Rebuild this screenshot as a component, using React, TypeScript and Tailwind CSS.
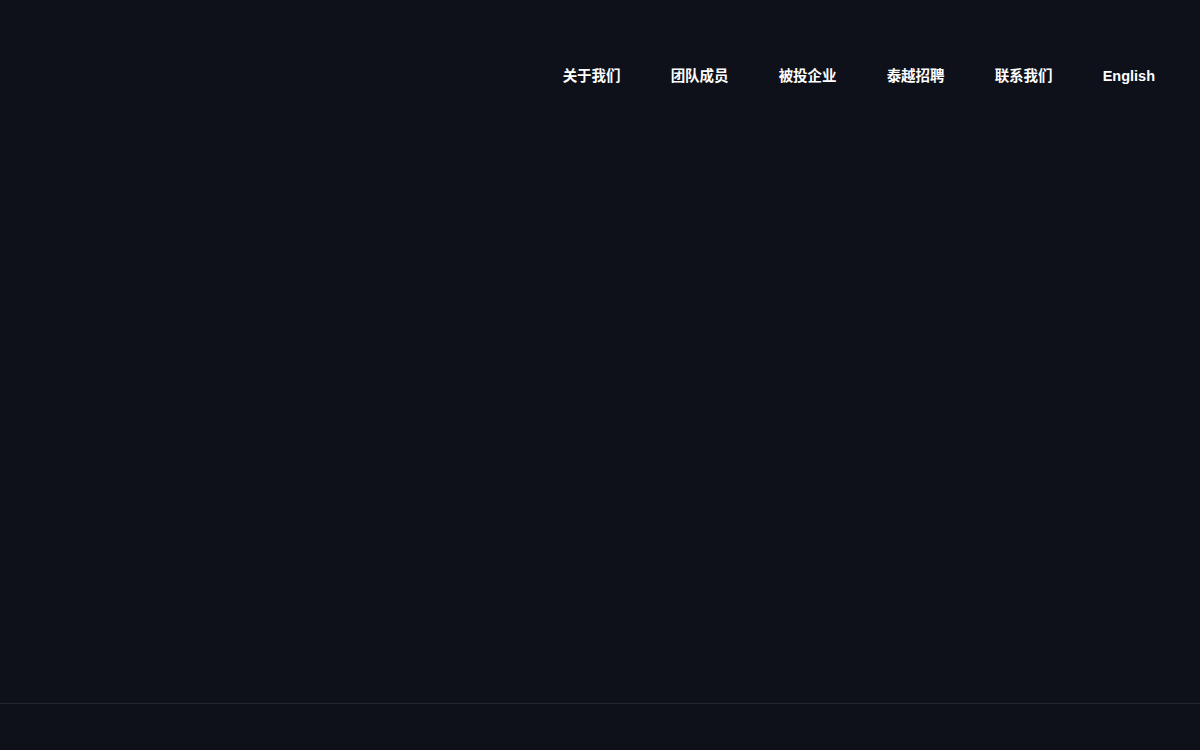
const navItems = ["关于我们", "团队成员", "被投企业", "泰越招聘", "联系我们", "English"];

export default function App() {
  return (
    <div
      className="flex h-[750px] w-full flex-col bg-[#0e111a] text-white"
      style={{ fontFamily: '"Liberation Sans", "Noto Sans CJK SC", sans-serif' }}
    >
      {/* Header */}
      <header className="flex h-[152px] items-center justify-end pr-[45px]">
        <nav className="flex items-center gap-[50px]">
          {navItems.map((item) => (
            <a key={item} href="#" className="text-[14.5px] font-bold leading-none text-white">
              {item}
            </a>
          ))}
        </nav>
      </header>

      <main className="flex-1" />

      {/* Footer */}
      <footer className="h-[47px] border-t border-[#23262e]" />
    </div>
  );
}
